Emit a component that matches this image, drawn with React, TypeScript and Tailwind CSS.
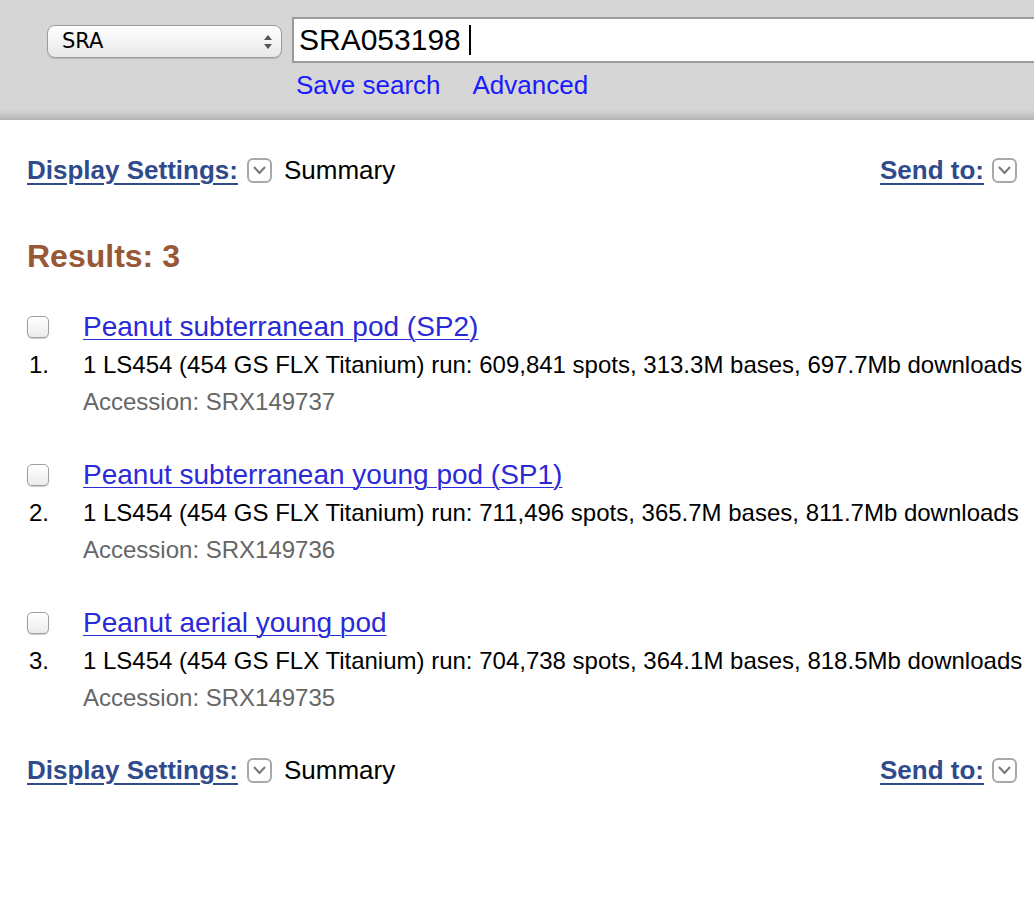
import React from "react";

const font = { fontFamily: '"Liberation Sans", Arial, sans-serif' };

function DropIcon() {
  return (
    <span className="inline-flex h-[25px] w-[25px] items-center justify-center rounded-[6px] border-2 border-[#a8a8a8] bg-white">
      <svg width="15" height="10" viewBox="0 0 15 10">
        <path d="M2 2 L7.5 8 L13 2" fill="none" stroke="#777" strokeWidth="2" />
      </svg>
    </span>
  );
}

function SettingsRow() {
  return (
    <div className="flex h-[36px] items-center justify-between pr-[17px]">
      <div className="flex items-center">
        <a className="text-[26px] font-bold text-[#2f4b8c] underline decoration-2 underline-offset-[4px]">Display Settings:</a>
        <span className="ml-[9px] mr-[12px] flex"><DropIcon /></span>
        <span className="text-[26px] text-black">Summary</span>
      </div>
      <div className="flex items-center">
        <a className="text-[26px] font-bold text-[#2f4b8c] underline decoration-2 underline-offset-[4px]">Send to:</a>
        <span className="ml-[8px] flex"><DropIcon /></span>
      </div>
    </div>
  );
}

const items = [
  {
    title: "Peanut subterranean pod (SP2)",
    desc: "1 LS454 (454 GS FLX Titanium) run: 609,841 spots, 313.3M bases, 697.7Mb downloads",
    acc: "SRX149737",
  },
  {
    title: "Peanut subterranean young pod (SP1)",
    desc: "1 LS454 (454 GS FLX Titanium) run: 711,496 spots, 365.7M bases, 811.7Mb downloads",
    acc: "SRX149736",
  },
  {
    title: "Peanut aerial young pod",
    desc: "1 LS454 (454 GS FLX Titanium) run: 704,738 spots, 364.1M bases, 818.5Mb downloads",
    acc: "SRX149735",
  },
];

export default function App() {
  return (
    <div className="min-h-[924px] w-[1034px] overflow-hidden bg-white" style={font}>
      <div className="h-[120px] bg-[linear-gradient(to_bottom,#d6d6d6_0,#d6d6d6_110px,#b4b4b4_120px)]">
        <div className="flex pt-[17px]">
          <div className="ml-[47px] mt-[8px] flex h-[33px] w-[235px] shrink-0 items-center justify-between rounded-[8px] border border-[#9c9c9c] bg-[linear-gradient(to_bottom,#ffffff,#f1f1f1_60%,#e8e8e8)] pl-[14px] pr-[8px] shadow-[0_1px_1px_rgba(0,0,0,0.15)]">
            <span className="text-[21px] text-black" style={{ fontFamily: '"DejaVu Sans", "Noto Sans", sans-serif' }}>SRA</span>
            <svg width="10" height="18" viewBox="0 0 10 18">
              <path d="M5 2 L9 7 L1 7 Z" fill="#555" />
              <path d="M5 16 L9 11 L1 11 Z" fill="#555" />
            </svg>
          </div>
          <div className="ml-[10px] flex-1">
            <div className="flex h-[46px] w-[760px] items-center border-2 border-[#9a9a9a] bg-white pl-[5px]">
              <span className="text-[30px] leading-[34px] text-black">SRA053198</span>
              <span className="ml-[8px] h-[30px] w-[2px] bg-black" />
            </div>
            <div className="mt-[4px] flex gap-[32px] pl-[4px] text-[26px] leading-[36px] text-[#1a1aff]">
              <a>Save search</a>
              <a>Advanced</a>
            </div>
          </div>
        </div>
      </div>

      <div className="pl-[27px] pt-[32px]">
        <SettingsRow />
        <div className="mt-[48px] text-[32px] font-bold leading-[40px] text-[#985735]">Results: 3</div>
        <div className="mt-[32px] flex flex-col gap-[36px]">
          {items.map((it, i) => (
            <div key={i} className="flex">
              <div className="flex w-[56px] flex-col">
                <div className="flex h-[38px] items-center">
                  <span className="h-[22px] w-[22px] rounded-[5px] border border-[#a0a0a0] bg-[linear-gradient(to_bottom,#ffffff,#ececec)] shadow-[0_1px_1px_rgba(0,0,0,0.2)]" />
                </div>
                <div className="pl-[2px] text-[24px] leading-[38px] text-black">{i + 1}.</div>
              </div>
              <div className="flex flex-col">
                <a className="text-[28px] leading-[38px] text-[#2a2ad8] underline decoration-1 underline-offset-[3px]">{it.title}</a>
                <div className="text-[24px] leading-[38px] text-black">{it.desc}</div>
                <div className="text-[24px] leading-[36px] text-[#666]">Accession: {it.acc}</div>
              </div>
            </div>
          ))}
        </div>
        <div className="mt-[36px]">
          <SettingsRow />
        </div>
      </div>
    </div>
  );
}
